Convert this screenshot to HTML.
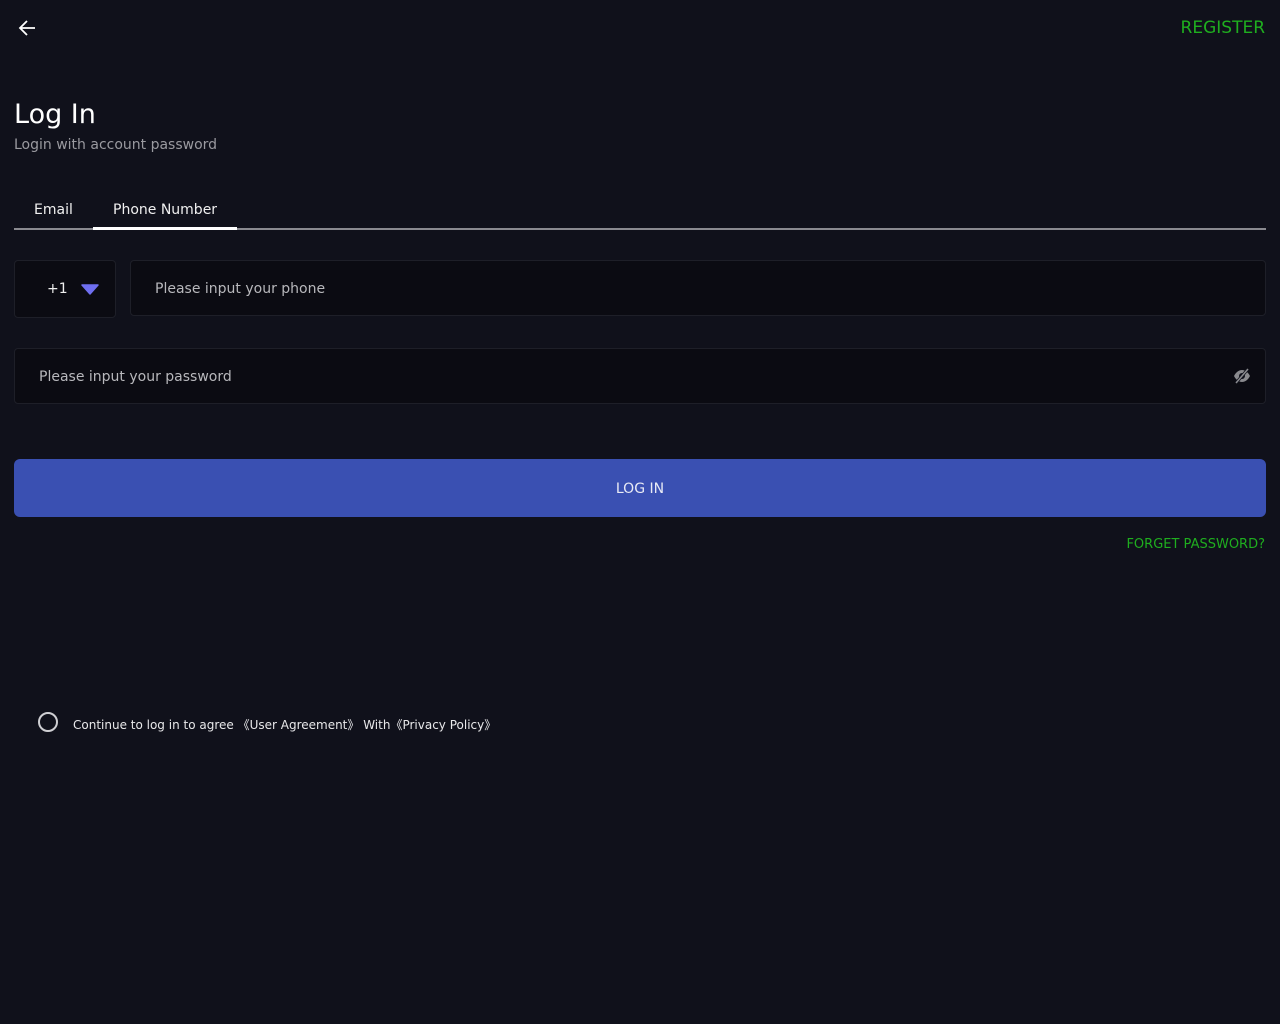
<!DOCTYPE html>
<html><head><meta charset="utf-8"><style>
*{margin:0;padding:0;box-sizing:border-box}
body{width:1280px;height:1024px;background:#10111b;font-family:"DejaVu Sans","Liberation Sans","Noto Sans CJK SC",sans-serif;color:#fff;position:relative;overflow:hidden}
.abs{position:absolute}
.reg{right:15px;top:18px;font-size:17px;color:#1fae1f}
h1{position:absolute;left:14px;top:99px;font-size:27px;font-weight:400;color:#fff}
.sub{left:14px;top:137px;font-size:14px;color:#9a9aa0}
.tabs{left:14px;top:228px;width:1252px;height:2px;background:#8a8a90}
.tab{top:202px;font-size:14px;color:#f0f0f0}
.ind{left:93px;top:227px;width:144px;height:3px;background:#fff}
.box{background:#0b0b12;border:1px solid #1e1f28;border-radius:4px}
.ph{font-size:14px;color:#b8b8bc}
.btn{left:14px;top:459px;width:1252px;height:58px;background:#3a50b2;border-radius:6px;text-align:center;line-height:60px;font-size:14px;color:#e8eaf5}
.fg{right:15px;top:537px;font-size:13px;color:#1fae1f}
.agree{left:73px;top:716px;font-size:12px;color:#e8e8ea;white-space:pre}
.circ{left:38px;top:712px;width:20px;height:20px;border:2px solid #cfcfd3;border-radius:50%}
</style></head><body>
<svg class="abs" style="left:17px;top:18px" width="20" height="20" viewBox="0 0 20 20"><path d="M18 10H3M10 3L3 10l7 7" fill="none" stroke="#fff" stroke-width="1.8"/></svg>
<div class="abs reg">REGISTER</div>
<h1>Log In</h1>
<div class="abs sub">Login with account password</div>
<div class="abs tab" style="left:34px">Email</div>
<div class="abs tab" style="left:113px">Phone Number</div>
<div class="abs tabs"></div>
<div class="abs ind"></div>
<div class="abs box" style="left:14px;top:260px;width:102px;height:58px"></div>
<div class="abs" style="left:47px;top:281px;font-size:14px;color:#f0f0f0">+1</div>
<svg class="abs" style="left:81px;top:284px" width="18" height="11" viewBox="0 0 18 11"><path d="M1 1h16l-8 9z" fill="#6f6ff0" stroke="#6f6ff0" stroke-linejoin="round" stroke-width="1.5"/></svg>
<div class="abs box" style="left:130px;top:260px;width:1136px;height:56px"></div>
<div class="abs ph" style="left:155px;top:281px">Please input your phone</div>
<div class="abs box" style="left:14px;top:348px;width:1252px;height:56px"></div>
<div class="abs ph" style="left:39px;top:369px">Please input your password</div>
<svg class="abs" style="left:1232px;top:366px" width="20" height="20" viewBox="0 0 20 20"><path d="M2 10c2-4 5-6 8-6s6 2 8 6c-2 4-5 6-8 6s-6-2-8-6z" fill="#8a8a8e"/><circle cx="10" cy="10" r="3" fill="#10111b"/><path d="M4 17L16 3" stroke="#10111b" stroke-width="3"/><path d="M4 17L16 3" stroke="#8a8a8e" stroke-width="1.5"/></svg>
<div class="abs btn">LOG IN</div>
<div class="abs fg">FORGET PASSWORD?</div>
<div class="abs circ"></div>
<div class="abs agree">Continue to log in to agree 《User Agreement》 With《Privacy Policy》</div>
</body></html>
